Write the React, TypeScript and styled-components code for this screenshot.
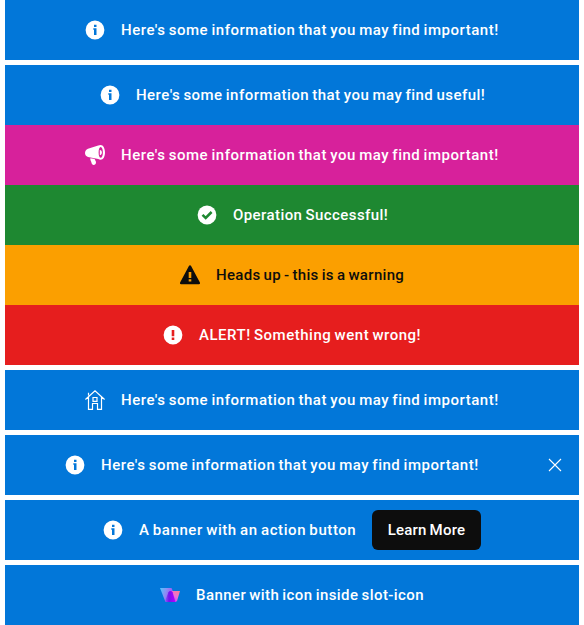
import React from "react";
import styled, { createGlobalStyle } from "styled-components";

const GlobalStyle = createGlobalStyle`
  body { margin: 0; background: #fff; font-family: Roboto, "Liberation Sans", sans-serif; }
`;

const Page = styled.main`
  display: flex;
  flex-direction: column;
  gap: 5px;
  padding: 0 5px;
`;

const Stack = styled.section`
  display: flex;
  flex-direction: column;
`;

const Bar = styled.div<{ $bg: string; $fg?: string }>`
  display: flex;
  align-items: center;
  height: 60px;
  background: ${(p) => p.$bg};
  color: ${(p) => p.$fg ?? "#fff"};
`;

const Content = styled.div`
  flex: 1;
  display: flex;
  align-items: center;
  justify-content: center;
  gap: 16px;
`;

const IconSvg = styled.svg`
  display: block;
  flex: none;
  width: 20px;
  height: 20px;
`;

const Label = styled.span<{ $width: number; $spacing: number }>`
  flex: none;
  width: ${(p) => p.$width}px;
  font-size: 15px;
  font-weight: 500;
  line-height: 24px;
  letter-spacing: ${(p) => p.$spacing}px;
  word-spacing: -1px;
  white-space: nowrap;
`;

const ActionButton = styled.button`
  flex: none;
  width: 109px;
  height: 40px;
  padding: 0;
  border: 0;
  border-radius: 6px;
  background: #0d0d0d;
  color: #fff;
  font: 500 15px/24px Roboto, "Liberation Sans", sans-serif;
  letter-spacing: 0.22px;
  word-spacing: -1px;
`;

const CloseButton = styled.button`
  flex: none;
  display: flex;
  align-items: center;
  justify-content: center;
  width: 24px;
  height: 24px;
  margin-right: 12px;
  margin-left: 4px;
  padding: 0;
  border: 0;
  background: none;
  color: inherit;
`;

const InfoIcon = () => (
  <IconSvg viewBox="0 0 20 20">
    <path
      fill="currentColor"
      fillRule="evenodd"
      d="M10 .6a9.400 9.400 0 1 1 0 18.800A9.400 9.400 0 0 1 10 .6ZM9 4.800v2.300h2.500V4.800ZM8.300 8.300v1.500H9V15h2.500V8.300Z"
    />
  </IconSvg>
);

const MegaphoneIcon = () => (
  <IconSvg viewBox="0 0 20 20">
    <path
      fill="currentColor"
      fillRule="evenodd"
      d="M15.600 0C18.300 0 20 3.500 20 7.600s-1.700 7.200-4.400 7.200c-.8 0-1.600-.3-2.300-.8L3 11.900C1 11.500 0 9.800 0 8s1-3.700 3-4.300l10.200-3.200C14 .2 14.700 0 15.600 0Zm.1 2c-1.200 0-2.100 2.300-2.100 5.500s.9 5.300 2.100 5.300 2.200-2.100 2.200-5.300S16.900 2 15.700 2Zm-.9 2.900c1.400 0 2.100 1.200 2.100 2.600s-.7 2.600-2.100 2.600Z"
    />
    <path
      fill="currentColor"
      d="m5.400 13.200 4.300.9c0 1.200 1.300 1.800 1.300 3.400 0 1.500-1.200 2.500-2.500 2.400-1.800-.1-1.900-1.900-2.300-3.200-.4-1.200-1.200-2-.8-3.500Z"
    />
  </IconSvg>
);

const CheckIcon = () => (
  <IconSvg viewBox="0 0 20 20">
    <circle cx="10" cy="10" r="9.400" fill="currentColor" />
    <path d="m5.500 9.800 3.200 3.200 5.900-6" fill="none" stroke="#1e8831" strokeWidth="2.500" />
  </IconSvg>
);

const WarningIcon = () => (
  <IconSvg viewBox="0 0 20 20">
    <path
      fill="currentColor"
      fillRule="evenodd"
      d="M8.900.9c.5-.8 1.700-.8 2.200 0l8.800 16.700c.4.800-.1 1.600-1 1.600H1.100c-.9 0-1.400-.8-1-1.600ZM8.700 7v6.100h2.600V7Zm0 7.200v2.400h2.600v-2.400Z"
    />
  </IconSvg>
);

const ErrorIcon = () => (
  <IconSvg viewBox="0 0 20 20">
    <path
      fill="currentColor"
      fillRule="evenodd"
      d="M10 .6a9.400 9.400 0 1 1 0 18.800A9.400 9.400 0 0 1 10 .6ZM8.700 5v6.300h2.600V5Zm0 7.400v2.500h2.600v-2.500Z"
    />
  </IconSvg>
);

const HomeIcon = () => (
  <IconSvg viewBox="0 0 20 20" fill="none" stroke="currentColor" strokeWidth="1.200">
    <path d="M.4 9.500 10 .9l9.600 8.600M3.500 7v12.400h4v-5.900h5v5.900h4V7M3.500 5.500V2.800M8 7.500h4v3.800H8Z" />
  </IconSvg>
);

const FoldIcon = () => (
  <IconSvg viewBox="0 0 20 20">
    <defs>
      <linearGradient id="fold-left" gradientUnits="userSpaceOnUse" x1="0" y1="4" x2="12" y2="8">
        <stop offset="0" stopColor="#4fc6ff" />
        <stop offset=".5" stopColor="#8a90f4" />
        <stop offset="1" stopColor="#a850f5" />
      </linearGradient>
      <linearGradient id="fold-right" gradientUnits="userSpaceOnUse" x1="20" y1="6" x2="12" y2="17">
        <stop offset="0" stopColor="#ff7c8c" />
        <stop offset=".5" stopColor="#ee70d8" />
        <stop offset="1" stopColor="#b83cff" />
      </linearGradient>
      <linearGradient id="fold-center" gradientUnits="userSpaceOnUse" x1="5" y1="12" x2="15" y2="12">
        <stop offset="0" stopColor="#8b60f4" />
        <stop offset=".4" stopColor="#7412ee" />
        <stop offset="1" stopColor="#b300ff" />
      </linearGradient>
    </defs>
    <polygon points="0,3.1 11.5,3.1 13.2,7 15,17 6,17 4.9,15.6" fill="url(#fold-left)" />
    <polygon points="11,6.1 20,6.1 17,16 15.8,17 8,17" fill="url(#fold-right)" />
    <path d="M5.100 16 8.400 7.300q.6-1.300 2.200-1.300 1.500 0 2 1.300L15.500 17H6.300Q5.500 17 5.100 16Z" fill="url(#fold-center)" />
  </IconSvg>
);

const BLUE = "#0277d9";

interface BannerProps {
  text: string;
  icon: React.ReactNode;
  width: number;
  spacing?: number;
  bg?: string;
  fg?: string;
  action?: string;
  closable?: boolean;
}

const Banner = ({ text, icon, width, spacing = 0.52, bg = BLUE, fg, action, closable }: BannerProps) => (
  <Bar $bg={bg} $fg={fg}>
    <Content>
      {icon}
      <Label $width={width} $spacing={spacing}>{text}</Label>
      {action && <ActionButton>{action}</ActionButton>}
    </Content>
    {closable && (
      <CloseButton aria-label="Close">
        <svg width="14" height="14" viewBox="0 0 14 14" fill="none" stroke="currentColor" strokeWidth="1.100">
          <path d="m1 1 12 12M13 1 1 13" />
        </svg>
      </CloseButton>
    )}
  </Bar>
);

const IMPORTANT = "Here's some information that you may find important!";

export default function App() {
  return (
    <>
      <GlobalStyle />
      <Page>
        <Banner text={IMPORTANT} icon={<InfoIcon />} width={378} />
        <Stack>
          <Banner text="Here's some information that you may find useful!" icon={<InfoIcon />} width={348} spacing={0.47} />
          <Banner text={IMPORTANT} icon={<MegaphoneIcon />} width={378} bg="#d7219b" />
          <Banner text="Operation Successful!" icon={<CheckIcon />} width={154} spacing={0.42} bg="#1e8831" />
          <Banner text="Heads up - this is a warning" icon={<WarningIcon />} width={188} spacing={0.32} bg="#fb9f00" fg="#0d0d0d" />
          <Banner text="ALERT! Something went wrong!" icon={<ErrorIcon />} width={222} bg="#e61e1e" />
        </Stack>
        <Banner text={IMPORTANT} icon={<HomeIcon />} width={378} />
        <Banner text={IMPORTANT} icon={<InfoIcon />} width={378} closable />
        <Banner text="A banner with an action button" icon={<InfoIcon />} width={217} spacing={0.58} action="Learn More" />
        <Banner text="Banner with icon inside slot-icon" icon={<FoldIcon />} width={228} spacing={0.42} />
      </Page>
    </>
  );
}
